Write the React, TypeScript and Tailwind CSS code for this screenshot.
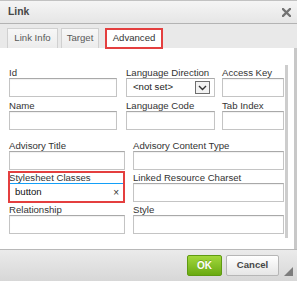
import React from "react";

const font = { fontFamily: '"Liberation Sans", Arial, sans-serif' };

const Label = ({ text }: { text: string }) => (
  <div className="h-[11px] text-[9.6px] leading-[11px] text-[#333] whitespace-nowrap">{text}</div>
);

const Box = ({ className }: { className: string }) => (
  <div
    className={
      "h-[19px] border border-[#c4c4c4] border-t-[#a9a9a9] bg-white shadow-[inset_0_1px_1px_rgba(0,0,0,0.06)] " +
      className
    }
  />
);

const Field = ({ label, box }: { label: string; box: string }) => (
  <div className="flex flex-col shrink-0">
    <Label text={label} />
    <Box className={box} />
  </div>
);

export default function App() {
  return (
    <div style={font} className="w-[297px] h-[281px] flex flex-col overflow-hidden bg-[#e9e9e9] relative">
      {/* title bar */}
      <div className="h-[24px] shrink-0 flex items-center justify-between border-t border-b border-t-[#c2c2c2] border-b-[#b3b3b3] bg-gradient-to-b from-[#f5f5f5] to-[#e6e6e6] pl-[8px] pr-[6px]">
        <span className="text-[10.4px] font-bold text-[#474747] leading-none">Link</span>
        <svg width="9" height="9" viewBox="0 0 9 9" className="mt-[1px]">
          <path d="M1 1 L8 8 M8 1 L1 8" stroke="#737373" strokeWidth="2.3" strokeLinecap="square" />
        </svg>
      </div>

      {/* tabs */}
      <div className="h-[24px] shrink-0 flex items-end pl-[7px] bg-[#e9e9e9]">
        <div className="w-[51px] h-[20px] flex items-center justify-center border border-b-0 border-[#d0d0d0] bg-gradient-to-b from-[#f7f7f7] to-[#ececec] text-[9.6px] text-[#595959]">
          Link Info
        </div>
        <div className="ml-[3px] w-[38px] h-[20px] flex items-center justify-center border border-b-0 border-[#d0d0d0] bg-gradient-to-b from-[#f7f7f7] to-[#ececec] text-[9.6px] text-[#595959]">
          Target
        </div>
        <div className="ml-[6px] w-[58px] h-[21px] -mb-[1px] z-10 flex items-center justify-center border-2 border-[#e43f3f] bg-white text-[9.6px] text-[#333]">
          Advanced
        </div>
      </div>

      {/* content */}
      <div className="h-[201px] shrink-0 flex bg-white border-r-[3px] border-[#c8c8c8]">
        <div className="w-[285px] shrink-0 overflow-hidden pl-[9px] pt-[19px] flex flex-col">
          <div className="flex items-start">
            <Field label="Id" box="w-[108px]" />
            <div className="ml-[9px] flex flex-col shrink-0">
              <Label text="Language Direction" />
              <div className="w-[89px] h-[19px] border border-[#c4c4c4] border-t-[#a9a9a9] bg-white flex items-center justify-between pl-[6px] pr-[4px]">
                <span className="text-[9.6px] text-[#222]">&lt;not set&gt;</span>
                <div className="w-[15px] h-[13px] border border-[#6e6e6e] bg-[#f2f2f2] flex items-center justify-center">
                  <svg width="9" height="6" viewBox="0 0 9 6">
                    <path d="M1 1 L4.5 4.5 L8 1" fill="none" stroke="#333" strokeWidth="1.4" />
                  </svg>
                </div>
              </div>
            </div>
            <div className="ml-[7px]">
              <Field label="Access Key" box="w-[62px]" />
            </div>
          </div>

          <div className="flex items-start mt-[3px]">
            <Field label="Name" box="w-[108px]" />
            <div className="ml-[9px]">
              <Field label="Language Code" box="w-[89px]" />
            </div>
            <div className="ml-[7px]">
              <Field label="Tab Index" box="w-[62px]" />
            </div>
          </div>

          <div className="flex items-start mt-[10px]">
            <Field label="Advisory Title" box="w-[116px]" />
            <div className="ml-[8px]">
              <Field label="Advisory Content Type" box="w-[151px]" />
            </div>
          </div>

          <div className="flex items-start mt-[2px]">
            <div className="relative flex flex-col shrink-0">
              <Label text="Stylesheet Classes" />
              <div className="w-[116px] h-[19px] border border-[#139ff7] bg-white flex items-center justify-between pl-[5px] pr-[5px]">
                <span className="text-[9.6px] text-[#111]">button</span>
                <span className="text-[10px] text-[#333] leading-none">×</span>
              </div>
              <div className="absolute -left-[1px] -top-[1px] right-0 -bottom-[1px] border-2 border-[#e43f3f]" />
            </div>
            <div className="ml-[8px]">
              <Field label="Linked Resource Charset" box="w-[151px]" />
            </div>
          </div>

          <div className="flex items-start mt-[2px]">
            <Field label="Relationship" box="w-[116px]" />
            <div className="ml-[8px]">
              <Field label="Style" box="w-[151px]" />
            </div>
          </div>
        </div>
        <div className="w-[3px] h-[173px] mt-[17px] shrink-0 bg-[#cdcdcd]" />
      </div>

      {/* footer */}
      <div className="flex-1 flex justify-end items-start pt-[5px] pr-[18px] gap-[4px] border-t border-[#b8b8b8] bg-gradient-to-b from-[#ebebeb] to-[#d7d7d7]">
        <div className="w-[35px] h-[21px] rounded-[2px] border border-[#5f9a12] bg-gradient-to-b from-[#a2d83a] to-[#6aaa10] flex items-center justify-center text-[10px] font-bold text-white [text-shadow:0_-1px_0_rgba(0,0,0,0.2)]">
          OK
        </div>
        <div className="w-[53px] h-[21px] rounded-[2px] border border-[#b6b6b6] bg-gradient-to-b from-[#ffffff] to-[#e6e6e6] flex items-center justify-center text-[9.6px] font-bold text-[#474747]">
          Cancel
        </div>
      </div>
      <svg width="9" height="9" viewBox="0 0 9 9" className="absolute right-[4px] bottom-[5px]">
        <path d="M9 0 L9 9 L0 9 Z" fill="#7d7d7d" />
      </svg>
    </div>
  );
}
